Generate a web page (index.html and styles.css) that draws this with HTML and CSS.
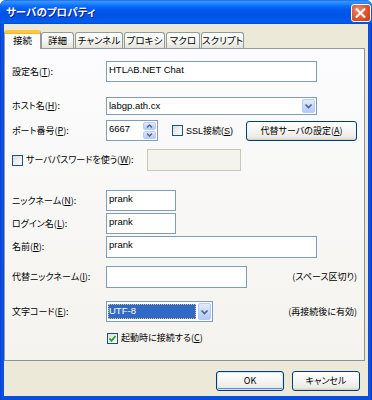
FILE: index.html
```html
<!DOCTYPE html>
<html lang="ja">
<head>
<meta charset="utf-8">
<title>サーバのプロパティ</title>
<link rel="stylesheet" href="styles.css">
</head>
<body>
<div class="window">
  <div class="titlebar">
    <span class="title">サーバのプロパティ</span>
    <span class="close"><svg width="20" height="19" viewBox="0 0 20 19"><path d="M6 5 L14 13 M14 5 L6 13" stroke="#fff" stroke-width="2.2" stroke-linecap="square" fill="none"/></svg></span>
  </div>
  <div class="frame">
    <div class="tabs">
      <div class="tab active">接続</div>
      <div class="tab">詳細</div>
      <div class="tab">チャンネル</div>
      <div class="tab">プロキシ</div>
      <div class="tab">マクロ</div>
      <div class="tab">スクリプト</div>
    </div>
    <div class="panel">
      <div class="row r1">
        <span class="lbl">設定名(<u>T</u>):</span>
        <div class="edit w-long">HTLAB.NET Chat</div>
      </div>
      <div class="row r2">
        <span class="lbl">ホスト名(<u>H</u>):</span>
        <div class="combo w-long"><span class="val">labgp.ath.cx</span><span class="drop"><svg width="9" height="6" viewBox="0 0 9 6"><path d="M1.5 1.5 L4.5 4.5 L7.5 1.5" stroke="#4d6185" stroke-width="1.6" fill="none"/></svg></span></div>
      </div>
      <div class="row r3">
        <span class="lbl">ポート番号(<u>P</u>):</span>
        <div class="spin"><span class="val">6667</span><span class="spinbtns"><span class="sb"><svg width="7" height="4" viewBox="0 0 7 4"><path d="M1 3.5 L3.5 1 L6 3.5" stroke="#4d6185" stroke-width="1.4" fill="none"/></svg></span><span class="sb"><svg width="7" height="4" viewBox="0 0 7 4"><path d="M1 0.5 L3.5 3 L6 0.5" stroke="#4d6185" stroke-width="1.4" fill="none"/></svg></span></span></div>
        <span class="check ssl"><span class="box"></span>SSL接続(<u>S</u>)</span>
        <button class="btn alt">代替サーバの設定(<u>A</u>)</button>
      </div>
      <div class="row r4">
        <span class="check pw"><span class="box"></span>サーバパスワードを使う(<u>W</u>):</span>
        <div class="edit w-pw disabled"></div>
      </div>
      <div class="row r5">
        <span class="lbl">ニックネーム(<u>N</u>):</span>
        <div class="edit w-short">prank</div>
      </div>
      <div class="row r6">
        <span class="lbl">ログイン名(<u>L</u>):</span>
        <div class="edit w-short">prank</div>
      </div>
      <div class="row r7">
        <span class="lbl">名前(<u>R</u>):</span>
        <div class="edit w-long">prank</div>
      </div>
      <div class="row r8">
        <span class="lbl">代替ニックネーム(<u>I</u>):</span>
        <div class="edit w-alt"></div>
        <span class="note">(スペース区切り)</span>
      </div>
      <div class="row r9">
        <span class="lbl">文字コード(<u>E</u>):</span>
        <div class="combo w-code"><span class="val sel">UTF-8</span><span class="drop"><svg width="9" height="6" viewBox="0 0 9 6"><path d="M1.5 1.5 L4.5 4.5 L7.5 1.5" stroke="#4d6185" stroke-width="1.6" fill="none"/></svg></span></div>
        <span class="note">(再接続後に有効)</span>
      </div>
      <div class="row r10">
        <span class="lbl"></span>
        <span class="check"><span class="box checked"><svg width="9" height="9" viewBox="0 0 9 9"><path d="M1.5 4.5 L3.5 6.8 L7.5 2" stroke="#21a121" stroke-width="1.8" fill="none"/></svg></span>起動時に接続する(<u>C</u>)</span>
      </div>
    </div>
    <div class="buttons">
      <button class="btn default">OK</button>
      <button class="btn">キャンセル</button>
    </div>
  </div>
</div>
</body>
</html>
```

FILE: styles.css
```css
* { box-sizing: border-box; }
html, body { margin: 0; padding: 0; }
body {
  width: 372px;
  height: 400px;
  overflow: hidden;
  background: #fff;
  font-family: "Noto Sans CJK JP", sans-serif;
  font-size: 9px;
  font-feature-settings: "palt" 1;
  color: #000;
}
u { text-decoration: underline; text-underline-offset: 1px; }

.window {
  width: 372px;
  height: 400px;
  display: flex;
  flex-direction: column;
  background: linear-gradient(90deg, #0a3fd0 0, #0d52e6 2px, #0a4ee0 3px, #0a4ee0 368px, #0d52e6 370px, #0834c8 372px);
  border-radius: 6px 6px 0 0;
  overflow: hidden;
}

.titlebar {
  height: 24px;
  flex: none;
  display: flex;
  justify-content: space-between;
  align-items: flex-start;
  padding: 0 1px 0 6px;
  background: linear-gradient(#0a5bd6 0, #3d95ff 1px, #2a8aff 3px, #0a6efc 6px, #0058ee 10px, #0054e3 15px, #0056e9 19px, #0060f0 22px, #0049d0 24px);
}
.title {
  color: #fff;
  font-weight: bold;
  font-size: 10.5px;
  line-height: 24px;
  text-shadow: 1px 1px 0 #0a1a8a;
}
.close {
  margin-top: 4px;
  width: 20px;
  height: 18px;
  border: 1px solid #fff;
  border-radius: 3px;
  background: radial-gradient(circle at 35% 30%, #f08a66 0, #e25a34 45%, #c8380f 100%);
  display: flex;
}
.close svg { margin: -1px 0 0 -1px; }

.frame {
  flex: 1;
  margin: 0 4px 4px 4px;
  background: #ece9d8;
  padding-top: 6px;
  display: flex;
  flex-direction: column;
}

.tabs {
  display: flex;
  align-items: flex-end;
  height: 18px;
}
.tab {
  height: 16px;
  border: 1px solid #919b9c;
  border-bottom: none;
  border-radius: 3px 3px 0 0;
  background: linear-gradient(#fff, #f3f3ef 60%, #e4e2da);
  font-size: 9.5px;
  line-height: 15px;
  text-align: center;
  margin-left: 1px;
}
.tab.active {
  height: 19px;
  margin-bottom: -1px;
  margin-left: 0;
  position: relative;
  z-index: 1;
  background: #fcfcfe;
  border-top: 3px solid #ffc73c;
  box-shadow: inset 0 1px 0 #f9b33a;
  line-height: 15px;
}
.tab:nth-child(1) { width: 37px; }
.tab:nth-child(2) { width: 33px; margin-left: 0; }
.tab:nth-child(3) { width: 48px; }
.tab:nth-child(4) { width: 41px; }
.tab:nth-child(5) { width: 34px; }
.tab:nth-child(6) { width: 43px; }

.panel {
  width: 361px;
  height: 313px;
  flex: none;
  border: 1px solid #919b9c;
  border-right-color: #8a9495;
  border-bottom-color: #8a9495;
  background: linear-gradient(#fcfcfe, #f4f3ee);
  padding: 0 7px 0 7px;
  display: flex;
  flex-direction: column;
}

.row { display: flex; align-items: center; flex: none; }
.r1 { margin-top: 12px; height: 21px; }
.r2 { margin-top: 15px; height: 18px; }
.r3 { margin-top: 5px; height: 21px; }
.r4 { margin-top: 8px; height: 22px; }
.r5 { margin-top: 19px; height: 21px; }
.r6 { margin-top: 2px; height: 21px; }
.r7 { margin-top: 2px; height: 22px; }
.r8 { margin-top: 8px; height: 22px; }
.r9 { margin-top: 13px; height: 21px; }
.r10 { margin-top: 10px; height: 12px; }

.lbl { width: 94px; flex: none; white-space: nowrap; line-height: 12px; }

.edit, .combo, .spin {
  height: 100%;
  border: 1px solid #7f9db9;
  background: #fff;
  font-family: "Liberation Sans", "Noto Sans CJK JP", sans-serif;
  font-feature-settings: normal;
  font-size: 9.5px;
  line-height: 11px;
  padding: 2px 0 0 2px;
  flex: none;
}
.edit.disabled { background: #f4f3ee; border-color: #c9c7ba; }
.w-long { width: 211px; }
.w-short { width: 70px; }
.w-pw { width: 94px; }
.w-alt { width: 141px; }
.w-code { width: 107px; }

.combo { display: flex; justify-content: space-between; padding: 0; }
.combo .val { padding: 2px 0 0 2px; }
.drop {
  width: 13px;
  margin: 1px;
  border: 1px solid #b7cbf5;
  border-radius: 2px;
  background: linear-gradient(#e3ebfd, #c4d6fc 60%, #b4c9f7);
  display: flex;
  align-items: center;
  justify-content: center;
}
.combo .val.sel {
  flex: 1;
  margin: 2px 1px 2px 1px;
  padding: 1px 0 0 1px;
  background: #316ac5;
  color: #fff;
  outline: 1px dotted #d8c27a;
  outline-offset: -1px;
}

.spin { width: 52px; display: flex; justify-content: space-between; padding: 0; }
.spin .val { padding: 2px 0 0 2px; }
.spinbtns { width: 13px; display: flex; flex-direction: column; margin: 1px; gap: 1px; }
.sb {
  flex: 1;
  border: 1px solid #b7cbf5;
  border-radius: 2px;
  background: linear-gradient(#e3ebfd, #c4d6fc 60%, #b4c9f7);
  display: flex;
  align-items: center;
  justify-content: center;
}

.check { display: flex; align-items: center; white-space: nowrap; line-height: 12px; }
.box {
  width: 11px;
  height: 11px;
  border: 1px solid #1c5180;
  background: linear-gradient(135deg, #dcdcd7, #fff);
  margin-right: 3px;
  flex: none;
  display: flex;
  align-items: center;
  justify-content: center;
}
.check.ssl { margin-left: 14px; font-family: "Liberation Sans", "Noto Sans CJK JP", sans-serif; }
.check.pw { width: 135px; }
.r10 .lbl { width: 95px; }

.note { margin-left: auto; line-height: 12px; white-space: nowrap; }

.btn {
  font-family: "Noto Sans CJK JP", sans-serif;
  font-feature-settings: "palt" 1;
  font-size: 9px;
  color: #000;
  height: 20px;
  border: 1px solid #003c74;
  border-radius: 3px;
  background: linear-gradient(#fff 0, #f7f7f4 40%, #ecebe6 85%, #d6d0c5 100%);
  padding: 0;
  line-height: 12px;
}
.btn.alt { margin-left: auto; width: 111px; height: 20px; }
.btn.default { box-shadow: inset 0 0 0 1px #cee7ff, inset 0 -1px 0 1px #6982ee; }

.buttons {
  display: flex;
  justify-content: flex-end;
  gap: 8px;
  margin-top: 10px;
  padding-right: 8px;
}
.buttons .btn { width: 68px; }
```
